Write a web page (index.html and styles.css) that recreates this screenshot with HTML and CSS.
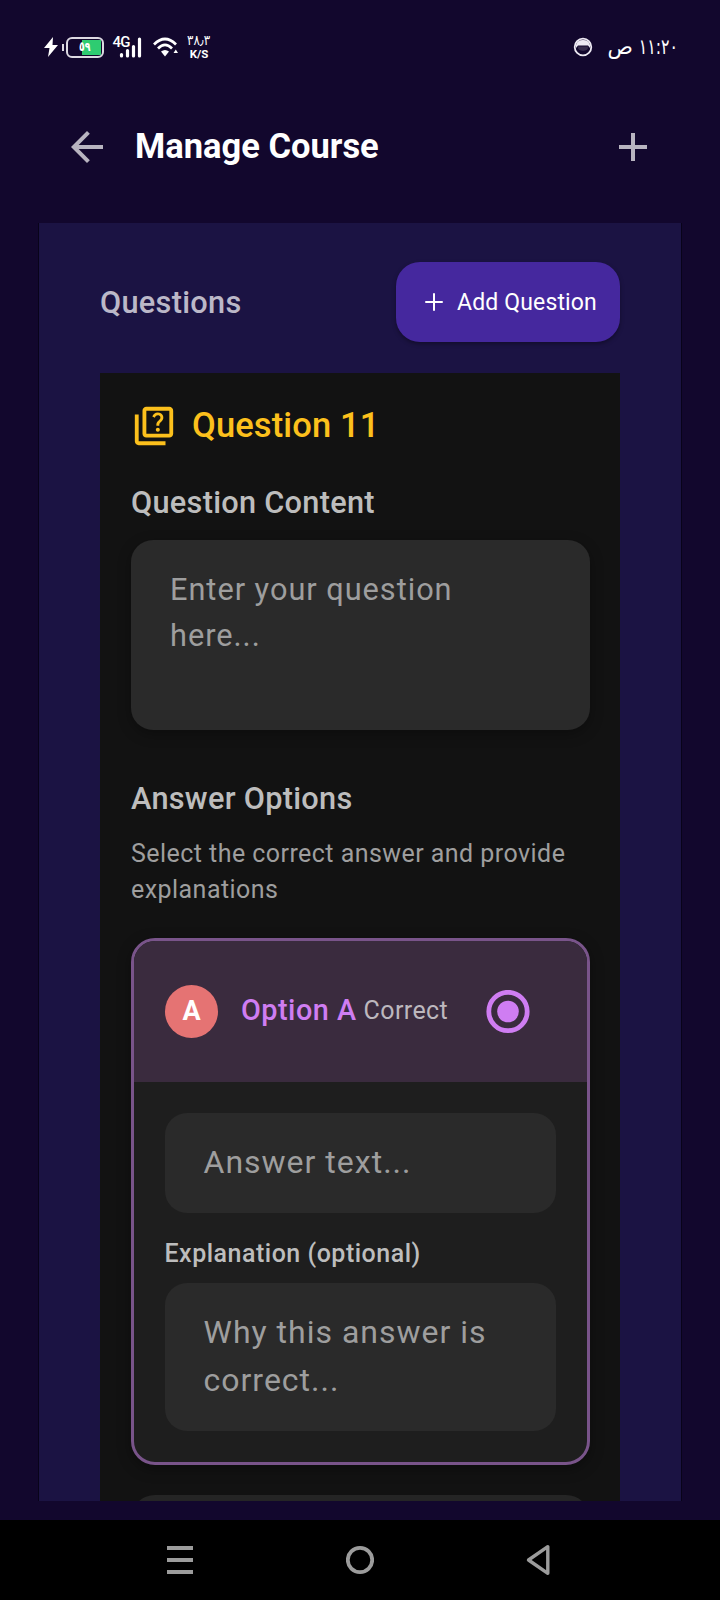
FILE: index.html
```html
<!DOCTYPE html>
<html lang="en">
<head>
<meta charset="utf-8">
<meta name="viewport" content="width=device-width">
<title>Manage Course</title>
<link rel="stylesheet" href="styles.css">
</head>
<body>
<div class="screen">
  <div class="status">
    <svg class="bolt" width="14" height="20" viewBox="0 0 14 20"><path d="M9 0 0 11h5.500L4 20 14 8H8.500z" fill="#fff"/></svg>
    <div class="battery"><span class="charge">٥٩</span></div>
    <svg class="signal" width="29" height="24" viewBox="0 0 29 24"><g stroke="#fff" stroke-width="3.200" stroke-linecap="round"><path d="M8.500 19.500v1.500M14.500 15.500v5.500M20.500 11.500v9.500M26.500 4v17"/></g><text class="net" x="-.5" y="12">4G</text></svg>
    <svg class="wifi" width="26" height="21" viewBox="0 0 26 21"><g fill="none" stroke="#fff" stroke-width="2.700"><path d="M1 7.500Q12 -3.500 23 7.500"/><path d="M5 11.500Q12 4.500 19 11.500"/></g><path d="M8 14.500Q12 11.500 16 14.500L12 19.500zM20.500 16l2.300-3.500L25 16z" fill="#fff"/></svg>
    <div class="speed"><span class="rate">٣٨٫٣</span><span class="unit">K/S</span></div>
    <svg class="face" width="20" height="20" viewBox="0 0 20 20"><circle cx="10" cy="10" r="8.300" fill="none" stroke="#eeeaf4" stroke-width="1.800"/><path d="M3 8Q4 3 10 3t7 5v3l-2-2.500H5L3 11z" fill="#eeeaf4"/><path d="M5 9.500h10q.5 4-5 4.500-5.500-.5-5-4.500" fill="#362b4c"/></svg>
    <div class="clock" dir="rtl"><span class="time">١١:٢٠</span> <span>ص</span></div>
  </div>

  <header class="appbar">
    <svg width="48" height="48" viewBox="0 0 24 24" fill="#b8b4c0"><path d="M20 11H7.830l5.590-5.590L12 4l-8 8 8 8 1.410-1.410L7.830 13H20z"/></svg>
    <h1>Manage Course</h1>
    <svg class="add" width="48" height="48" viewBox="0 0 24 24" fill="#b8b4c0"><path d="M19 13h-6v6h-2v-6H5v-2h6V5h2v6h6z"/></svg>
  </header>

  <main class="panel">
    <div class="toolbar">
      <h2>Questions</h2>
      <div class="button">
        <svg width="30" height="30" viewBox="0 0 24 24" fill="#fff"><path d="M19 12.800h-6.200V19h-1.600v-6.200H5v-1.600h6.200V5h1.600v6.200H19z"/></svg>
        <span>Add Question</span>
      </div>
    </div>
    <section class="question">
      <div class="heading">
        <svg width="46" height="46" viewBox="0 0 24 24" fill="#fcc01c"><path d="M4 6H2v14c0 1.100.9 2 2 2h14v-2H4z"/><path d="M20 2H8c-1.100 0-2 .9-2 2v12c0 1.100.9 2 2 2h12c1.100 0 2-.9 2-2V4c0-1.100-.9-2-2-2zm0 14H8V4h12z"/><path d="M13.510 10.160c.41-.73 1.180-1.160 1.630-1.800.48-.68.21-1.940-1.140-1.940-.88 0-1.320.67-1.500 1.230l-1.370-.57C11.510 5.960 12.520 5 13.990 5c1.230 0 2.080.56 2.510 1.260.37.6.58 1.730.01 2.570-.63.93-1.230 1.210-1.560 1.810-.13.24-.18.4-.18 1.180h-1.520c.01-.41-.06-1.080.27-1.660zm-.56 3.790c0-.59.47-1.040 1.050-1.040.59 0 1.040.45 1.040 1.040 0 .58-.44 1.050-1.040 1.050-.58 0-1.050-.47-1.050-1.050z"/></svg>
        <h2>Question 11</h2>
      </div>
      <h3 class="label-content">Question Content</h3>
      <div class="field prompt">Enter your question<br>here...</div>
      <h3 class="label-options">Answer Options</h3>
      <p class="hint">Select the correct answer and provide<br>explanations</p>
      <div class="option">
        <div class="option-head">
          <span class="letter">A</span>
          <span class="name">Option A</span>
          <span class="state">Correct</span>
          <svg class="radio" width="44" height="44" viewBox="0 0 44 44"><circle cx="22" cy="21.500" r="19.200" fill="none" stroke="#cf7df2" stroke-width="4.800"/><circle cx="22" cy="21.500" r="10.800" fill="#cf7df2"/></svg>
        </div>
        <div class="option-body">
          <div class="field answer">Answer text...</div>
          <h4>Explanation (optional)</h4>
          <div class="field answer">Why this answer is<br>correct...</div>
        </div>
      </div>
      <div class="option-next"></div>
    </section>
  </main>

  <nav class="navbar">
    <svg width="28" height="40" viewBox="0 0 28 40" fill="#9c9c9c"><path d="M1 6h26v4H1zM1 18h26v4H1zM1 30h26v4H1z"/></svg>
    <svg width="28" height="40" viewBox="0 0 28 40"><circle cx="14" cy="20" r="12.200" fill="none" stroke="#9c9c9c" stroke-width="3.800"/></svg>
    <svg width="28" height="40" viewBox="0 0 28 40"><path d="M21.800 6.700v26.600L2.500 20z" fill="none" stroke="#9c9c9c" stroke-width="3.400" stroke-linejoin="round"/></svg>
  </nav>
</div>
</body>
</html>
```
FILE: styles.css
```css
* { box-sizing: border-box; margin: 0; padding: 0; }
body {
  width: 720px;
  height: 1600px;
  overflow: hidden;
  background: #12072d;
  font-family: Roboto, "DejaVu Sans", sans-serif;
  color: #fff;
}
svg { display: block; flex: none; }
.screen { display: flex; flex-direction: column; height: 1600px; }

.status {
  display: flex;
  align-items: center;
  height: 94px;
  padding: 0 42px 0 44px;
}
.battery {
  position: relative;
  width: 38px;
  height: 21px;
  margin-left: 8px;
  border: 2px solid #dcd9e2;
  border-radius: 6px;
  background: linear-gradient(#2ecc71, #2ecc71) right 1px center / 19px 15px no-repeat;
}
.battery::before {
  content: "";
  position: absolute;
  left: -6px;
  top: 5px;
  width: 2px;
  height: 7px;
  background: #dcd9e2;
}
.charge {
  display: block;
  width: 15px;
  margin-left: 11px;
  font: bold 13px/16px "DejaVu Sans", sans-serif;
  transform: scaleX(.72);
  transform-origin: left;
}
.signal { margin-left: 9px; overflow: visible; }
.net { font: 500 15px Roboto, sans-serif; fill: #fff; letter-spacing: -.7px; }
.wifi { margin-left: 11px; }
.speed {
  display: flex;
  flex-direction: column;
  align-items: center;
  width: 26px;
  margin-left: 7px;
  white-space: nowrap;
}
.rate { font: 14px/13px "DejaVu Sans", sans-serif; transform: scaleX(.85); }
.unit { font: bold 11.500px/14px Roboto, sans-serif; }
.face { margin-left: auto; }
.clock {
  display: flex;
  gap: 8px;
  margin-left: 15px;
  font: 21px/28px "DejaVu Sans", sans-serif;
  white-space: nowrap;
}
.time { width: 37px; transform: scaleX(.75); transform-origin: right; }

.appbar {
  display: flex;
  align-items: center;
  height: 106px;
  margin-bottom: 23px;
  padding: 0 63px;
}
.appbar h1 { margin: 0 0 3px 24px; font-size: 34.500px; font-weight: 700; line-height: 44px; }
.appbar .add { margin-left: auto; }

.panel {
  height: 1278px;
  margin: 0 38px;
  padding: 39px 61px 0;
  overflow: hidden;
  border: solid #080319;
  border-width: 0 1px;
  background: #1b1343;
}
.toolbar { display: flex; align-items: center; justify-content: space-between; height: 80px; margin-bottom: 31px; }
.toolbar h2 { font-size: 30.720px; font-weight: 500; letter-spacing: .3px; color: #bbb8c8; }
.button {
  display: flex;
  align-items: center;
  gap: 8px;
  width: 224px;
  height: 80px;
  padding-left: 23px;
  border-radius: 24px;
  background: #45289e;
  box-shadow: 0 2px 4px rgba(0, 0, 0, .35);
  font-size: 23px;
  letter-spacing: .15px;
  white-space: nowrap;
}

.question { height: 1140px; padding: 30px 30px 0 31px; background: #121212; }
.heading { display: flex; align-items: center; gap: 15px; height: 46px; }
.heading h2 { margin-bottom: 3px; font-size: 34.560px; font-weight: 500; line-height: 44px; letter-spacing: .1px; color: #fcc01c; }
.question h3 { font-size: 30.720px; font-weight: 500; line-height: 40px; letter-spacing: .28px; color: #bdbdbd; }
.question .label-content { margin-top: 34px; }
.question .label-options { margin-top: 49px; }
.field { background: #2a2a2a; border-radius: 22px; color: #9e9e9e; }
.prompt {
  height: 190px;
  margin-top: 17px;
  padding: 27px 39px;
  box-shadow: 0 4px 14px rgba(0, 0, 0, .3);
  font-size: 30.720px;
  line-height: 46px;
  letter-spacing: .97px;
}
.hint {
  margin-top: 17px;
  font-size: 25px;
  line-height: 36px;
  letter-spacing: .45px;
  color: #9e9e9e;
  white-space: nowrap;
}

.option {
  height: 527px;
  margin-top: 30px;
  overflow: hidden;
  border: 3px solid #79548a;
  border-radius: 24px;
  background: #1e1e1e;
  box-shadow: 0 4px 14px rgba(0, 0, 0, .35);
}
.option-head { display: flex; align-items: center; height: 141px; padding-left: 31px; background: #3a2b3e; }
.letter {
  width: 53px;
  height: 53px;
  border-radius: 50%;
  background: #e57373;
  font-size: 27px;
  font-weight: 700;
  line-height: 53px;
  text-align: center;
}
.name { margin: 0 0 3px 23px; font-size: 28.800px; font-weight: 500; letter-spacing: .5px; color: #cf7df2; }
.state { margin: 0 0 2px 7px; font-size: 25px; letter-spacing: .4px; color: #bdb8be; }
.radio { margin-left: auto; margin-right: 57px; }
.option-body { padding: 31px 31px 0 30.500px; }
.answer { padding: 25px 39px 27px; font-size: 32px; line-height: 48px; letter-spacing: 1px; }
.option-body h4 {
  margin: 23px 0 11px;
  font-size: 25px;
  font-weight: 500;
  line-height: 36px;
  letter-spacing: .5px;
  color: #bdbdbd;
}
.option-next { height: 80px; margin-top: 30px; border-radius: 24px; background: #252525; }

.navbar {
  display: flex;
  justify-content: space-around;
  align-items: center;
  height: 80px;
  margin-top: 19px;
  padding: 0 90px;
  background: #000;
}
```
